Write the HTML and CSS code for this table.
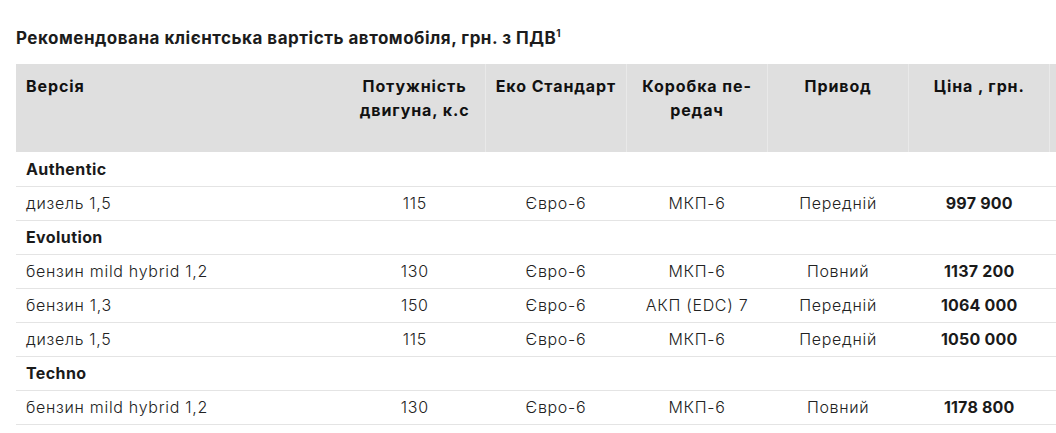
FILE: index.html
```html
<!DOCTYPE html>
<html lang="uk">
<head>
<meta charset="utf-8">
<title>Ціни</title>
<link rel="stylesheet" href="styles.css">
</head>
<body>
<div class="page">
  <h2 class="title">Рекомендована клієнтська вартість автомобіля, грн. з ПДВ<sup>1</sup></h2>
  <div class="wrap">
    <table class="prices">
      <colgroup>
        <col class="c-ver">
        <col class="c-num">
        <col class="c-num">
        <col class="c-num">
        <col class="c-num">
        <col class="c-num">
        <col class="c-num">
      </colgroup>
      <thead>
        <tr>
          <th class="left">Версія</th>
          <th class="nosep">Потужність<br>двигуна, к.с</th>
          <th>Еко Стандарт</th>
          <th>Коробка пе-<br>редач</th>
          <th>Привод</th>
          <th>Ціна , грн.</th>
          <th></th>
        </tr>
      </thead>
      <tbody>
        <tr class="cat"><td colspan="7">Authentic</td></tr>
        <tr><td class="left">дизель 1,5</td><td>115</td><td>Євро-6</td><td>МКП-6</td><td>Передній</td><td class="price">997 900</td><td></td></tr>
        <tr class="cat"><td colspan="7">Evolution</td></tr>
        <tr><td class="left">бензин mild hybrid 1,2</td><td>130</td><td>Євро-6</td><td>МКП-6</td><td>Повний</td><td class="price">1137 200</td><td></td></tr>
        <tr><td class="left">бензин 1,3</td><td>150</td><td>Євро-6</td><td>АКП (EDC) 7</td><td>Передній</td><td class="price">1064 000</td><td></td></tr>
        <tr><td class="left">дизель 1,5</td><td>115</td><td>Євро-6</td><td>МКП-6</td><td>Передній</td><td class="price">1050 000</td><td></td></tr>
        <tr class="cat"><td colspan="7">Techno</td></tr>
        <tr><td class="left">бензин mild hybrid 1,2</td><td>130</td><td>Євро-6</td><td>МКП-6</td><td>Повний</td><td class="price">1178 800</td><td></td></tr>
      </tbody>
    </table>
  </div>
</div>
</body>
</html>
```
FILE: styles.css
```css
html, body {
  margin: 0;
  padding: 0;
  background: #ffffff;
  overflow: hidden;
}
body {
  font-family: "Inter", "Noto Sans", sans-serif;
  color: #1f1f1f;
}
.page {
  padding: 0 0 0 16px;
}
.title {
  margin: 0;
  padding-top: 26px;
  height: 38px;
  font-size: 17px;
  line-height: 24px;
  font-weight: 700;
  color: #1c1c1c;
  letter-spacing: 0.5px;
}
.title sup {
  font-size: 10px;
  line-height: 0;
  vertical-align: 7px;
}
.wrap {
  overflow: hidden;
}
.prices {
  border-collapse: collapse;
  table-layout: fixed;
  width: 1175px;
  font-size: 16px;
}
.c-ver { width: 328px; }
.c-num { width: 141px; }
.prices th {
  background: #dfdfdf;
  height: 88px;
  padding: 10px 4px 0;
  box-sizing: border-box;
  vertical-align: top;
  text-align: center;
  font-weight: 700;
  line-height: 24px;
  color: #111;
  letter-spacing: 0.9px;
  border-left: 1px solid #e9e9e9;
}
.prices th:first-child,
.prices th.nosep {
  border-left: none;
}
.prices th.left {
  text-align: left;
  padding-left: 10px;
}
.prices td {
  height: 34px;
  padding: 0 4px;
  box-sizing: border-box;
  text-align: center;
  font-weight: 300;
  line-height: 20px;
  color: #222;
  letter-spacing: 0.7px;
  border-bottom: 1px solid #e4e4e4;
  white-space: nowrap;
}
.prices td.left {
  text-align: left;
  padding-left: 10px;
}
.prices td.price {
  font-weight: 700;
  color: #1a1a1a;
  letter-spacing: 0.2px;
}
.prices tr.cat td {
  text-align: left;
  font-weight: 700;
  padding-left: 10px;
  color: #1a1a1a;
  letter-spacing: 0.4px;
}
```
